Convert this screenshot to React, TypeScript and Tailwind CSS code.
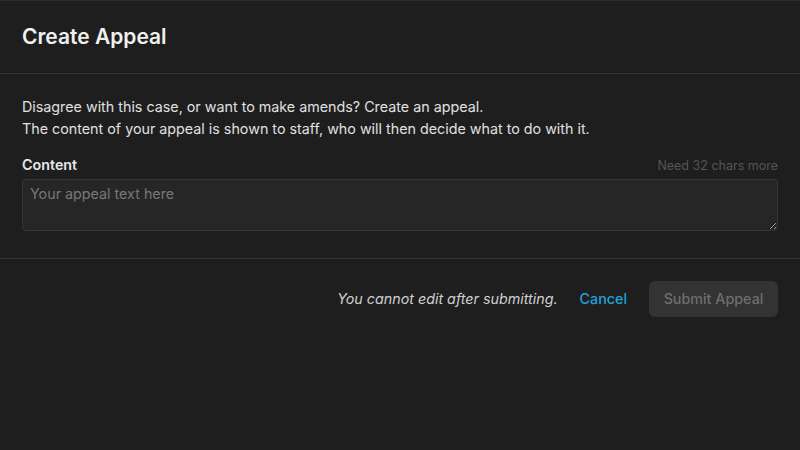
export default function App() {
  return (
    <div
      className="min-h-[450px] w-full bg-[#1e1e1e] border-t border-[#2b2b2b] text-[#e6e6e6]"
      style={{ fontFamily: "Inter, 'Noto Sans', sans-serif" }}
    >
      {/* Header */}
      <div className="h-[73px] flex items-center px-[22px] border-b border-[#333333]">
        <h1 className="text-[21px] font-semibold text-[#f0f0f0]">Create Appeal</h1>
      </div>

      {/* Body */}
      <div className="px-[22px] pt-[22px] pb-[27px] border-b border-[#333333]">
        <p className="text-[14.3px] leading-[22px] text-[#e0e0e0]">
          Disagree with this case, or want to make amends? Create an appeal.
          <br />
          The content of your appeal is shown to staff, who will then decide what to do with it.
        </p>
        <div className="mt-[15px] flex items-end justify-between">
          <label className="text-[14.3px] font-semibold text-[#e8e8e8] leading-[20px]">Content</label>
          <span className="text-[12.5px] text-[#555555] leading-[18px]">Need 32 chars more</span>
        </div>
        <textarea
          className="mt-[4px] block w-full h-[52px] rounded-[4px] border border-[#363636] bg-[#262626] px-[7px] py-[3px] text-[14.3px] leading-[22px] text-[#dcdcdc] placeholder:text-[#777777] outline-none"
          placeholder="Your appeal text here"
        />
      </div>

      {/* Footer */}
      <div className="flex items-center justify-end px-[22px] pt-[22px]">
        <span className="text-[14.3px] italic text-[#d0d0d0]">You cannot edit after submitting.</span>
        <button className="ml-[22px] text-[14.3px] font-medium text-[#1fa3dc]">Cancel</button>
        <button
          disabled
          className="ml-[22px] h-[36px] w-[129px] rounded-[6px] bg-[#333333] text-[14.3px] font-medium text-[#6e6e6e]"
        >
          Submit Appeal
        </button>
      </div>
    </div>
  )
}
